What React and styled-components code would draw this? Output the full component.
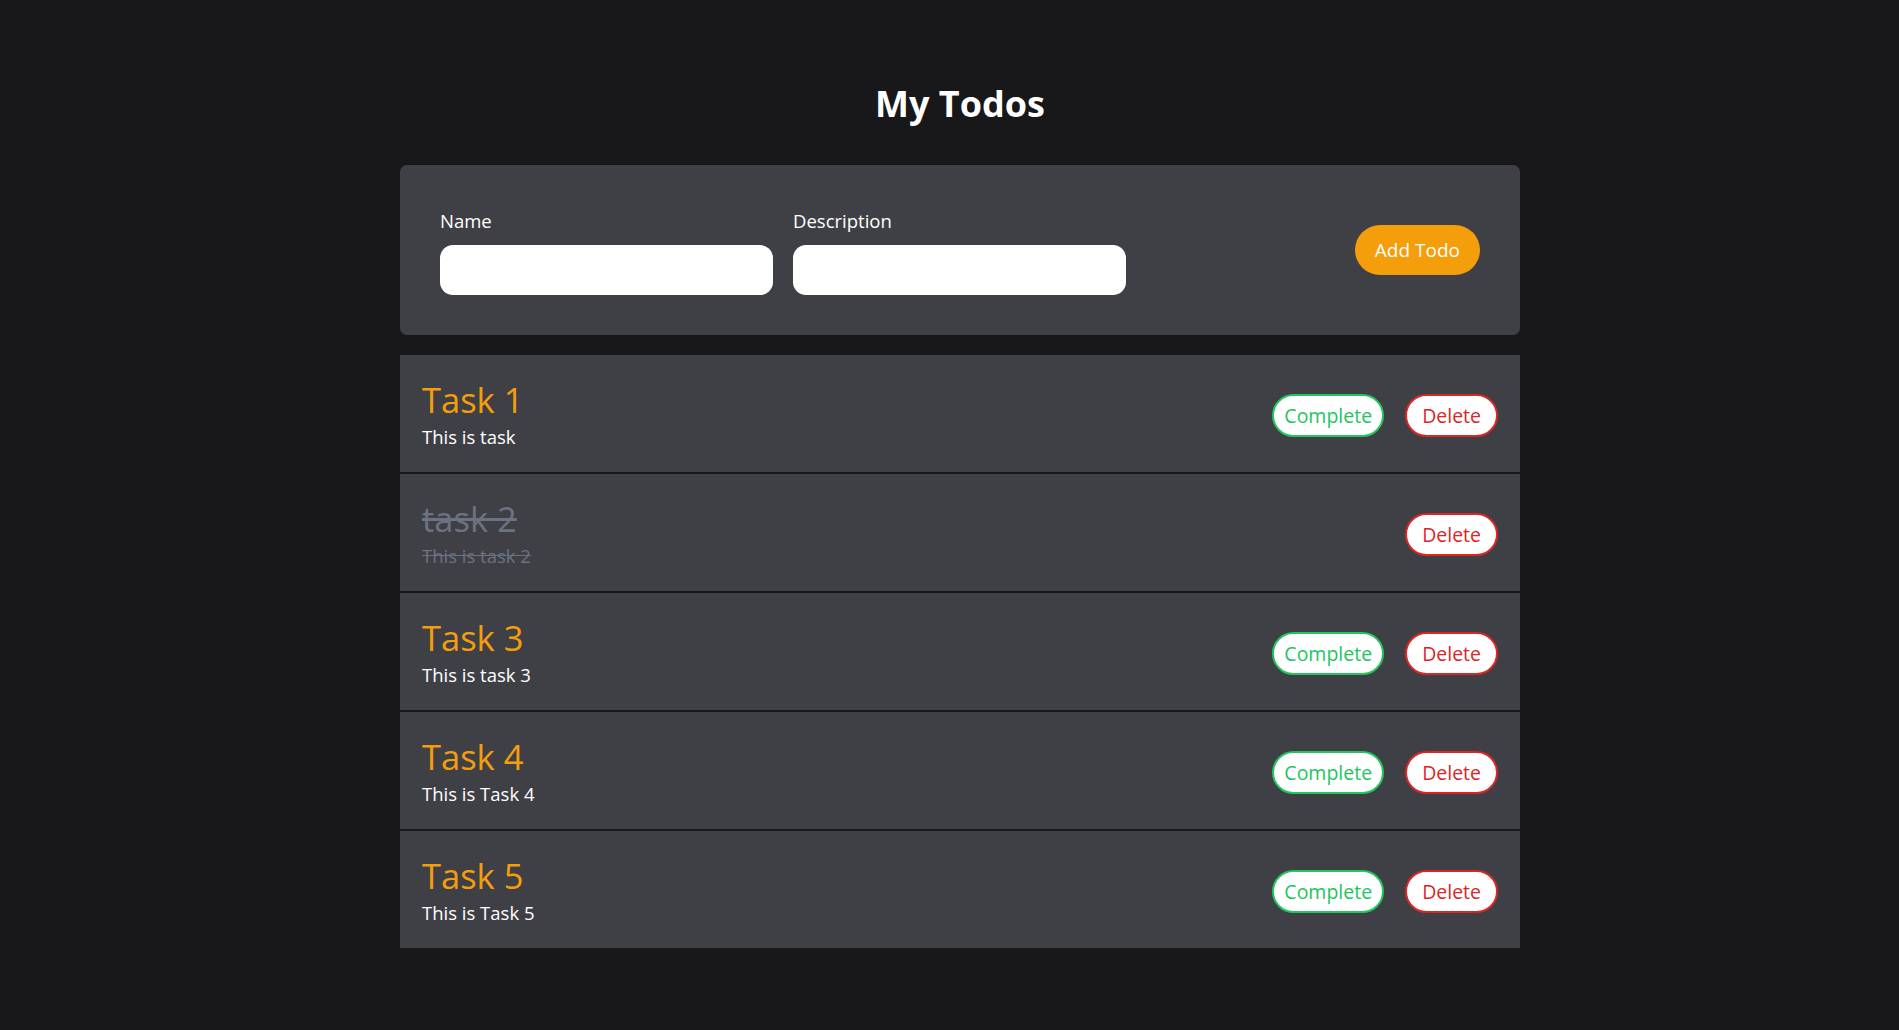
import React, { useState } from "react";
import styled, { createGlobalStyle } from "styled-components";

const GlobalStyle = createGlobalStyle`
  html, body {
    margin: 0;
    padding: 0;
    background: #18181b;
  }
  body {
    font-family: "Open Sans", "Noto Sans", Arial, sans-serif;
    color: #ffffff;
  }
  * { box-sizing: border-box; }
`;

const Page = styled.div`
  min-height: 1030px;
  padding: 80px 0 40px 21px;
  background: #18181b;
`;

const Container = styled.main`
  width: 1120px;
  margin: 0 auto;
  display: flex;
  flex-direction: column;
`;

const Title = styled.h1`
  margin: 0 0 37px;
  text-align: center;
  font-size: 36px;
  line-height: 48px;
  font-weight: 700;
  color: #ffffff;
`;

const FormCard = styled.form`
  display: flex;
  align-items: center;
  justify-content: space-between;
  background: #3f3f46;
  border-radius: 7px;
  padding: 40px;
  margin-bottom: 20px;
`;

const Fields = styled.div`
  display: flex;
  gap: 20px;
`;

const Field = styled.label`
  display: flex;
  flex-direction: column;
  gap: 8px;
`;

const LabelText = styled.span`
  font-size: 18.5px;
  line-height: 32px;
  color: #ffffff;
`;

const Input = styled.input`
  width: 333px;
  height: 50px;
  border: none;
  border-radius: 13px;
  background: #ffffff;
  padding: 0 14px;
  font-family: inherit;
  font-size: 18px;
  outline: none;
`;

const AddButton = styled.button`
  height: 50px;
  padding: 0 20px;
  border: none;
  border-radius: 9999px;
  background: #f59e0b;
  color: #ffffff;
  font-family: inherit;
  font-size: 19px;
  cursor: pointer;
`;

const List = styled.ul`
  list-style: none;
  margin: 0;
  padding: 0;
  display: flex;
  flex-direction: column;
  gap: 2px;
`;

const Row = styled.li`
  display: flex;
  align-items: center;
  justify-content: space-between;
  background: #3f3f46;
  padding: 23px 22px 20px;
`;

const Info = styled.div`
  display: flex;
  flex-direction: column;
`;

const TaskName = styled.span`
  font-size: 34.5px;
  line-height: 44px;
  color: ${(p) => (p.$done ? "#6b7280" : "#f59e0b")};
  text-decoration: ${(p) => (p.$done ? "line-through" : "none")};
`;

const TaskDesc = styled.span`
  font-size: 18.5px;
  line-height: 30px;
  color: ${(p) => (p.$done ? "#6b7280" : "#ffffff")};
  text-decoration: ${(p) => (p.$done ? "line-through" : "none")};
`;

const Actions = styled.div`
  display: flex;
  align-items: center;
  gap: 21px;
`;

const PillButton = styled.button`
  height: 43px;
  padding: ${(p) => (p.$variant === "complete" ? "0 10px" : "0 15px")};
  border-radius: 9999px;
  border: 2px solid ${(p) => (p.$variant === "complete" ? "#22c55e" : "#dc2626")};
  background: #ffffff;
  color: ${(p) => (p.$variant === "complete" ? "#22c55e" : "#dc2626")};
  font-family: inherit;
  font-size: 19.5px;
  font-weight: 500;
  cursor: pointer;
`;

const initialTodos = [
  { id: 1, name: "Task 1", desc: "This is task", done: false },
  { id: 2, name: "task 2", desc: "This is task 2", done: true },
  { id: 3, name: "Task 3", desc: "This is task 3", done: false },
  { id: 4, name: "Task 4", desc: "This is Task 4", done: false },
  { id: 5, name: "Task 5", desc: "This is Task 5", done: false },
];

export default function App() {
  const [todos, setTodos] = useState(initialTodos);
  const [name, setName] = useState("");
  const [desc, setDesc] = useState("");

  const add = (e) => {
    e.preventDefault();
    if (!name.trim()) return;
    setTodos([...todos, { id: Date.now(), name, desc, done: false }]);
    setName("");
    setDesc("");
  };

  return (
    <>
      <GlobalStyle />
      <Page>
        <Container>
          <Title>My Todos</Title>
          <FormCard onSubmit={add}>
            <Fields>
              <Field>
                <LabelText>Name</LabelText>
                <Input value={name} onChange={(e) => setName(e.target.value)} />
              </Field>
              <Field>
                <LabelText>Description</LabelText>
                <Input value={desc} onChange={(e) => setDesc(e.target.value)} />
              </Field>
            </Fields>
            <AddButton type="submit">Add Todo</AddButton>
          </FormCard>
          <List>
            {todos.map((t) => (
              <Row key={t.id}>
                <Info>
                  <TaskName $done={t.done}>{t.name}</TaskName>
                  <TaskDesc $done={t.done}>{t.desc}</TaskDesc>
                </Info>
                <Actions>
                  {!t.done && (
                    <PillButton
                      $variant="complete"
                      onClick={() =>
                        setTodos(todos.map((x) => (x.id === t.id ? { ...x, done: true } : x)))
                      }
                    >
                      Complete
                    </PillButton>
                  )}
                  <PillButton
                    $variant="delete"
                    onClick={() => setTodos(todos.filter((x) => x.id !== t.id))}
                  >
                    Delete
                  </PillButton>
                </Actions>
              </Row>
            ))}
          </List>
        </Container>
      </Page>
    </>
  );
}
